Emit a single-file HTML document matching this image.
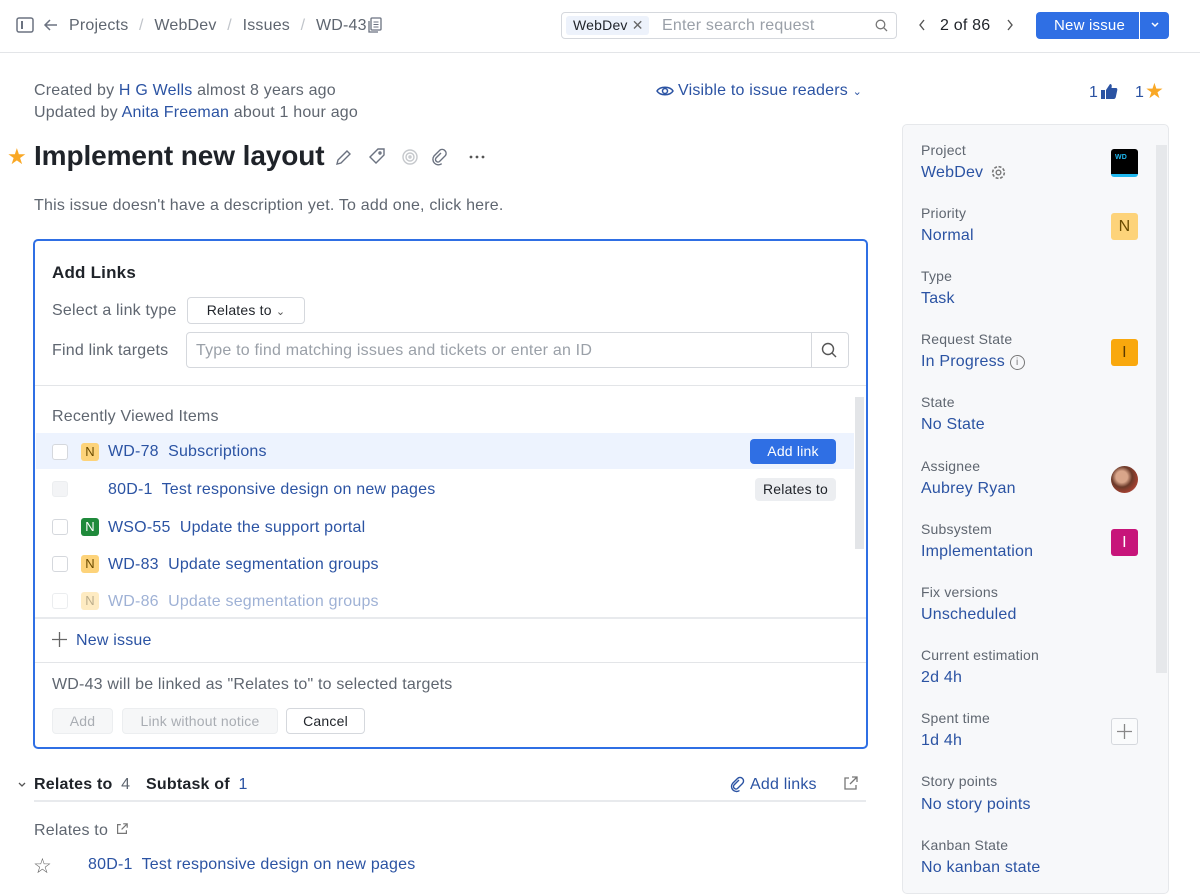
<!DOCTYPE html>
<html><head><meta charset="utf-8"><style>
*{box-sizing:border-box;margin:0;padding:0}
body{width:1200px;height:881px;overflow:hidden;background:#fff;font-family:"Liberation Sans",sans-serif;color:#1f2329;font-size:16px;position:relative;letter-spacing:.2px}
.a{position:absolute;white-space:nowrap}
.t{margin-top:1px}
.l{color:#2b53a3}
.g{color:#5f6670}
.lbl{color:#5f6670;font-size:14px}
.chk{position:absolute;width:16px;height:16px;border:1px solid #d5d8dd;border-radius:3px;background:#fff}
.n{position:absolute;width:18px;height:18px;border-radius:3px;background:#fdd37a;color:#6b4b00;font-size:13px;text-align:center;line-height:18px}
.btn{position:absolute;border:1px solid #d5d8dd;border-radius:4px;font-size:14px;text-align:center}
</style></head><body>
<!-- header -->
<svg class="a" style="left:16px;top:17px" width="18" height="16" viewBox="0 0 18 16"><rect x="1" y="1" width="16" height="14" rx="2" fill="none" stroke="#6b7280" stroke-width="1.5"/><line x1="6" y1="4" x2="6" y2="12" stroke="#6b7280" stroke-width="2"/></svg>
<svg class="a" style="left:43px;top:17px" width="16" height="16" viewBox="0 0 16 16"><path d="M14 8H2M7 3L2 8l5 5" fill="none" stroke="#6b7280" stroke-width="1.5"/></svg>
<div class="a g" style="left:69px;top:17px;font-size:16px">Projects <span style="color:#c0c4ca;margin:0 6px">/</span> WebDev <span style="color:#c0c4ca;margin:0 6px">/</span> Issues <span style="color:#c0c4ca;margin:0 6px">/</span> WD-43</div>
<svg class="a" style="left:368px;top:17px" width="14" height="16" viewBox="0 0 14 16"><rect x="3" y="1" width="10" height="12" rx="1" fill="none" stroke="#6b7280" stroke-width="1.3"/><path d="M1 4v11h9" fill="none" stroke="#6b7280" stroke-width="1.3"/><path d="M5.5 5h5M5.5 7.5h5M5.5 10h5" stroke="#6b7280"/></svg>
<div class="a" style="left:561px;top:12px;width:336px;height:27px;border:1px solid #d5d8dd;border-radius:4px"></div>
<div class="a" style="left:566px;top:16px;width:83px;height:19px;background:#edf2fb;border-radius:3px;font-size:14px;padding:1px 0 0 7px">WebDev <span style="color:#666">✕</span></div>
<div class="a" style="left:662px;top:17px;color:#9aa0a8">Enter search request</div>
<svg class="a" style="left:875px;top:19px" width="13" height="13" viewBox="0 0 13 13"><circle cx="5.5" cy="5.5" r="4.3" fill="none" stroke="#777" stroke-width="1.3"/><path d="M8.7 8.7L12 12" stroke="#777" stroke-width="1.3"/></svg>
<svg class="a" style="left:918px;top:19px" width="8" height="12" viewBox="0 0 8 12"><path d="M6 1L2 6l4 5" fill="none" stroke="#555" stroke-width="1.4"/></svg>
<div class="a" style="left:940px;top:17px">2 of 86</div>
<svg class="a" style="left:1006px;top:19px" width="8" height="12" viewBox="0 0 8 12"><path d="M2 1l4 5-4 5" fill="none" stroke="#555" stroke-width="1.4"/></svg>
<div class="a" style="left:1036px;top:12px;width:133px;height:27px;background:#2f6fe4;border-radius:4px"></div>
<div class="a" style="left:1054px;top:17px;color:#fff;font-size:15px">New issue</div>
<div class="a" style="left:1139px;top:12px;width:1px;height:27px;background:#fff"></div>
<svg class="a" style="left:1150px;top:21px" width="10" height="8" viewBox="0 0 10 8"><path d="M2 2l3 3 3-3" fill="none" stroke="#fff" stroke-width="1.5"/></svg>
<div class="a" style="left:0;top:52px;width:1200px;height:1px;background:#e3e5e8"></div>

<div class="a g" style="left:34px;top:82px">Created by <span class="l">H G Wells</span> almost 8 years ago</div>
<div class="a g" style="left:34px;top:104px">Updated by <span class="l">Anita Freeman</span> about 1 hour ago</div>
<svg class="a" style="left:656px;top:84px" width="18" height="14" viewBox="0 0 18 14"><path d="M1 7C4 2 14 2 17 7C14 12 4 12 1 7Z" fill="none" stroke="#2b53a3" stroke-width="1.5"/><circle cx="9" cy="7" r="2.5" fill="none" stroke="#2b53a3" stroke-width="1.5"/></svg>
<div class="a l" style="left:678px;top:82px">Visible to issue readers <span style="font-size:11px">⌄</span></div>
<div class="a l" style="left:1089px;top:84px">1</div>
<svg class="a" style="left:1100px;top:83px" width="18" height="17" viewBox="0 0 18 17"><path d="M1 7h4v9H1zM6 7l4-6c2 0 2 2 1.5 4H16c1 0 1.5 1 1.3 2l-1.5 7c-.2 1-1 2-2 2H6z" fill="#2b53a3"/></svg>
<div class="a l" style="left:1135px;top:84px">1</div>
<div class="a" style="left:1145px;top:79px;color:#f9a826;font-size:21px">★</div>

<div class="a" style="left:7px;top:144px;color:#f9a826;font-size:22px">★</div>
<div class="a" style="left:34px;top:140px;font-size:28px;font-weight:bold;letter-spacing:-.1px">Implement new layout</div>
<svg class="a" style="left:334px;top:147px" width="120" height="20" viewBox="0 0 120 20" fill="none" stroke="#6b7280" stroke-width="1.4"><path d="M3 17l1-4L13 4l3 3-9 9z"/><path d="M36 10l8-8h6v6l-8 8z"/><circle cx="46" cy="6" r="1"/><g stroke="#c5c8cc"><circle cx="76" cy="10" r="7"/><circle cx="76" cy="10" r="4"/><circle cx="76" cy="10" r="1"/></g><path d="M107 6l-5 5a2.5 2.5 0 0 0 3.5 3.5l6-6a4 4 0 0 0-5.5-5.5l-6 6a5.5 5.5 0 0 0 7.7 7.7"/></svg>
<svg class="a" style="left:469px;top:155px" width="16" height="4" viewBox="0 0 16 4"><circle cx="2" cy="2" r="1.4" fill="#555"/><circle cx="8" cy="2" r="1.4" fill="#555"/><circle cx="14" cy="2" r="1.4" fill="#555"/></svg>
<div class="a g" style="left:34px;top:197px">This issue doesn't have a description yet. To add one, click here.</div>

<!-- add links panel -->
<div class="a" style="left:33px;top:239px;width:835px;height:510px;border:2px solid #2f6fe4;border-radius:5px"></div>
<div class="a" style="left:52px;top:263px;font-size:17px;font-weight:bold">Add Links</div>
<div class="a g" style="left:52px;top:302px">Select a link type</div>
<div class="btn" style="left:187px;top:297px;width:118px;height:27px;line-height:25px">Relates to <span style="font-size:11px;color:#555">⌄</span></div>
<div class="a g" style="left:52px;top:342px">Find link targets</div>
<div class="a" style="left:186px;top:332px;width:663px;height:36px;border:1px solid #d5d8dd;border-radius:4px"></div>
<div class="a" style="left:811px;top:333px;width:1px;height:34px;background:#d5d8dd"></div>
<div class="a" style="left:196px;top:342px;color:#9aa0a8">Type to find matching issues and tickets or enter an ID</div>
<svg class="a" style="left:821px;top:342px" width="16" height="16" viewBox="0 0 16 16"><circle cx="7" cy="7" r="5.5" fill="none" stroke="#555" stroke-width="1.4"/><path d="M11 11l4 4" stroke="#555" stroke-width="1.4"/></svg>
<div class="a" style="left:35px;top:385px;width:831px;height:1px;background:#e3e5e8"></div>
<div class="a g" style="left:52px;top:408px">Recently Viewed Items</div>
<div class="a" style="left:855px;top:397px;width:9px;height:152px;background:#e3e5e8"></div>
<div class="a" style="left:36px;top:433px;width:818px;height:36px;background:#edf3fe"></div>
<div class="chk" style="left:52px;top:444px"></div><div class="n" style="left:81px;top:443px">N</div>
<div class="a l" style="left:108px;top:443px">WD-78&nbsp; Subscriptions</div>
<div class="a" style="left:750px;top:439px;width:86px;height:25px;background:#2f6fe4;border-radius:4px;color:#fff;font-size:14px;text-align:center;line-height:25px">Add link</div>
<div class="chk" style="left:52px;top:481px;background:#f3f4f6;border-color:#eceef0"></div>
<div class="a l" style="left:108px;top:481px">80D-1&nbsp; Test responsive design on new pages</div>
<div class="a" style="left:755px;top:478px;width:81px;height:23px;background:#eceef1;border-radius:4px;font-size:14px;text-align:center;line-height:23px">Relates to</div>
<div class="chk" style="left:52px;top:519px"></div><div class="n" style="left:81px;top:518px;background:#1f8a3b;color:#fff">N</div>
<div class="a l" style="left:108px;top:519px">WSO-55&nbsp; Update the support portal</div>
<div class="chk" style="left:52px;top:556px"></div><div class="n" style="left:81px;top:555px">N</div>
<div class="a l" style="left:108px;top:556px">WD-83&nbsp; Update segmentation groups</div>
<div style="opacity:.45"><div class="chk" style="left:52px;top:593px"></div><div class="n" style="left:81px;top:592px">N</div>
<div class="a l" style="left:108px;top:593px">WD-86&nbsp; Update segmentation groups</div></div>
<div class="a" style="left:35px;top:617px;width:831px;height:2px;background:#e8eaed"></div>
<svg class="a" style="left:52px;top:632px" width="15" height="15" viewBox="0 0 15 15"><path d="M7.5 0v15M0 7.5h15" stroke="#666" stroke-width="1.3"/></svg>
<div class="a l" style="left:76px;top:632px">New issue</div>
<div class="a" style="left:35px;top:662px;width:831px;height:1px;background:#e3e5e8"></div>
<div class="a g" style="left:52px;top:676px">WD-43 will be linked as "Relates to" to selected targets</div>
<div class="btn" style="left:52px;top:708px;width:61px;height:26px;line-height:24px;color:#a9adb3;background:#f6f7f8;border-color:#eceef0">Add</div>
<div class="btn" style="left:122px;top:708px;width:156px;height:26px;line-height:24px;color:#a9adb3;background:#f6f7f8;border-color:#eceef0">Link without notice</div>
<div class="btn" style="left:286px;top:708px;width:79px;height:26px;line-height:24px">Cancel</div>

<!-- relates -->
<svg class="a" style="left:17px;top:781px" width="10" height="8" viewBox="0 0 10 8"><path d="M2 2l3 3 3-3" fill="none" stroke="#555" stroke-width="1.3"/></svg>
<div class="a" style="left:34px;top:776px;font-weight:bold">Relates to <span class="g" style="font-weight:normal;margin-left:4px">4</span></div>
<div class="a" style="left:146px;top:776px;font-weight:bold">Subtask of <span class="l" style="font-weight:normal;margin-left:4px">1</span></div>
<svg class="a" style="left:729px;top:776px" width="17" height="17" viewBox="0 0 17 17"><path d="M10 4l-5 5a2.5 2.5 0 0 0 3.5 3.5l5-5a3.5 3.5 0 0 0-5-5l-5 5a5 5 0 0 0 7 7" fill="none" stroke="#2b53a3" stroke-width="1.4"/></svg>
<div class="a l" style="left:750px;top:776px">Add links</div>
<svg class="a" style="left:843px;top:776px" width="15" height="15" viewBox="0 0 15 15" fill="none" stroke="#777" stroke-width="1.3"><path d="M6 2H2v11h11V9M9 1h5v5M14 1L7 8"/></svg>
<div class="a" style="left:34px;top:800px;width:832px;height:2px;background:#e8eaed"></div>
<div class="a g" style="left:34px;top:822px">Relates to</div>
<svg class="a" style="left:116px;top:823px" width="12" height="12" viewBox="0 0 15 15" fill="none" stroke="#777" stroke-width="1.5"><path d="M6 2H2v11h11V9M9 1h5v5M14 1L7 8"/></svg>
<div class="a" style="left:33px;top:854px;color:#666;font-size:21px">☆</div>
<div class="a l" style="left:88px;top:856px">80D-1&nbsp; Test responsive design on new pages</div>

<!-- sidebar -->
<div class="a" style="left:902px;top:124px;width:267px;height:770px;background:#f7f8fa;border:1px solid #e6e8eb;border-radius:5px"></div>
<div class="a" style="left:1156px;top:145px;width:11px;height:528px;background:#e6e8eb"></div>
<div class="a lbl" style="left:921px;top:142px">Project</div><div class="a l" style="left:921px;top:164px">WebDev</div>
<svg class="a" style="left:990px;top:164px" width="17" height="17" viewBox="0 0 16 16"><circle cx="8" cy="8" r="5.5" fill="none" stroke="#777" stroke-width="1.5" stroke-dasharray="2.8 1.5"/><circle cx="8" cy="8" r="2.2" fill="none" stroke="#777" stroke-width="1.3"/></svg>
<div class="a" style="left:1111px;top:149px;width:27px;height:28px;background:#000;border-radius:3px;border-bottom:3px solid #1fb8ef;color:#1fb8ef;font-size:7px;font-weight:bold;padding:5px 0 0 4px">WD</div>
<div class="a lbl" style="left:921px;top:205px">Priority</div><div class="a l" style="left:921px;top:227px">Normal</div>
<div class="a" style="left:1111px;top:213px;width:27px;height:27px;background:#fdd37a;border-radius:3px;color:#6b4b00;text-align:center;line-height:27px">N</div>
<div class="a lbl" style="left:921px;top:268px">Type</div><div class="a l" style="left:921px;top:290px">Task</div>
<div class="a lbl" style="left:921px;top:331px">Request State</div><div class="a l" style="left:921px;top:353px">In Progress <span style="display:inline-block;width:15px;height:15px;border:1.3px solid #777;border-radius:50%;font-size:10px;color:#777;text-align:center;line-height:13px;vertical-align:1px">i</span></div>
<div class="a" style="left:1111px;top:339px;width:27px;height:27px;background:#f9a80d;border-radius:3px;color:#5a3a00;text-align:center;line-height:27px">I</div>
<div class="a lbl" style="left:921px;top:394px">State</div><div class="a l" style="left:921px;top:416px">No State</div>
<div class="a lbl" style="left:921px;top:458px">Assignee</div><div class="a l" style="left:921px;top:480px">Aubrey Ryan</div>
<div class="a" style="left:1111px;top:466px;width:27px;height:27px;border-radius:50%;background:radial-gradient(circle at 40% 40%,#d9a58a 0 25%,#6b3a2a 45%,#a04030 70%,#c9c3cf)"></div>
<div class="a lbl" style="left:921px;top:521px">Subsystem</div><div class="a l" style="left:921px;top:543px">Implementation</div>
<div class="a" style="left:1111px;top:529px;width:27px;height:27px;background:#c7157a;border-radius:3px;color:#fff;text-align:center;line-height:27px">I</div>
<div class="a lbl" style="left:921px;top:584px">Fix versions</div><div class="a l" style="left:921px;top:606px">Unscheduled</div>
<div class="a lbl" style="left:921px;top:647px">Current estimation</div><div class="a l" style="left:921px;top:669px">2d 4h</div>
<div class="a lbl" style="left:921px;top:710px">Spent time</div><div class="a l" style="left:921px;top:732px">1d 4h</div>
<div class="a" style="left:1111px;top:718px;width:27px;height:27px;border:1px solid #d5d8dd;border-radius:3px;background:#fafbfc"></div>
<svg class="a" style="left:1117px;top:724px" width="15" height="15" viewBox="0 0 15 15"><path d="M7.5 0v15M0 7.5h15" stroke="#888" stroke-width="1.3"/></svg>
<div class="a lbl" style="left:921px;top:773px">Story points</div><div class="a l" style="left:921px;top:796px">No story points</div>
<div class="a lbl" style="left:921px;top:837px">Kanban State</div><div class="a l" style="left:921px;top:859px">No kanban state</div>
</body></html>
